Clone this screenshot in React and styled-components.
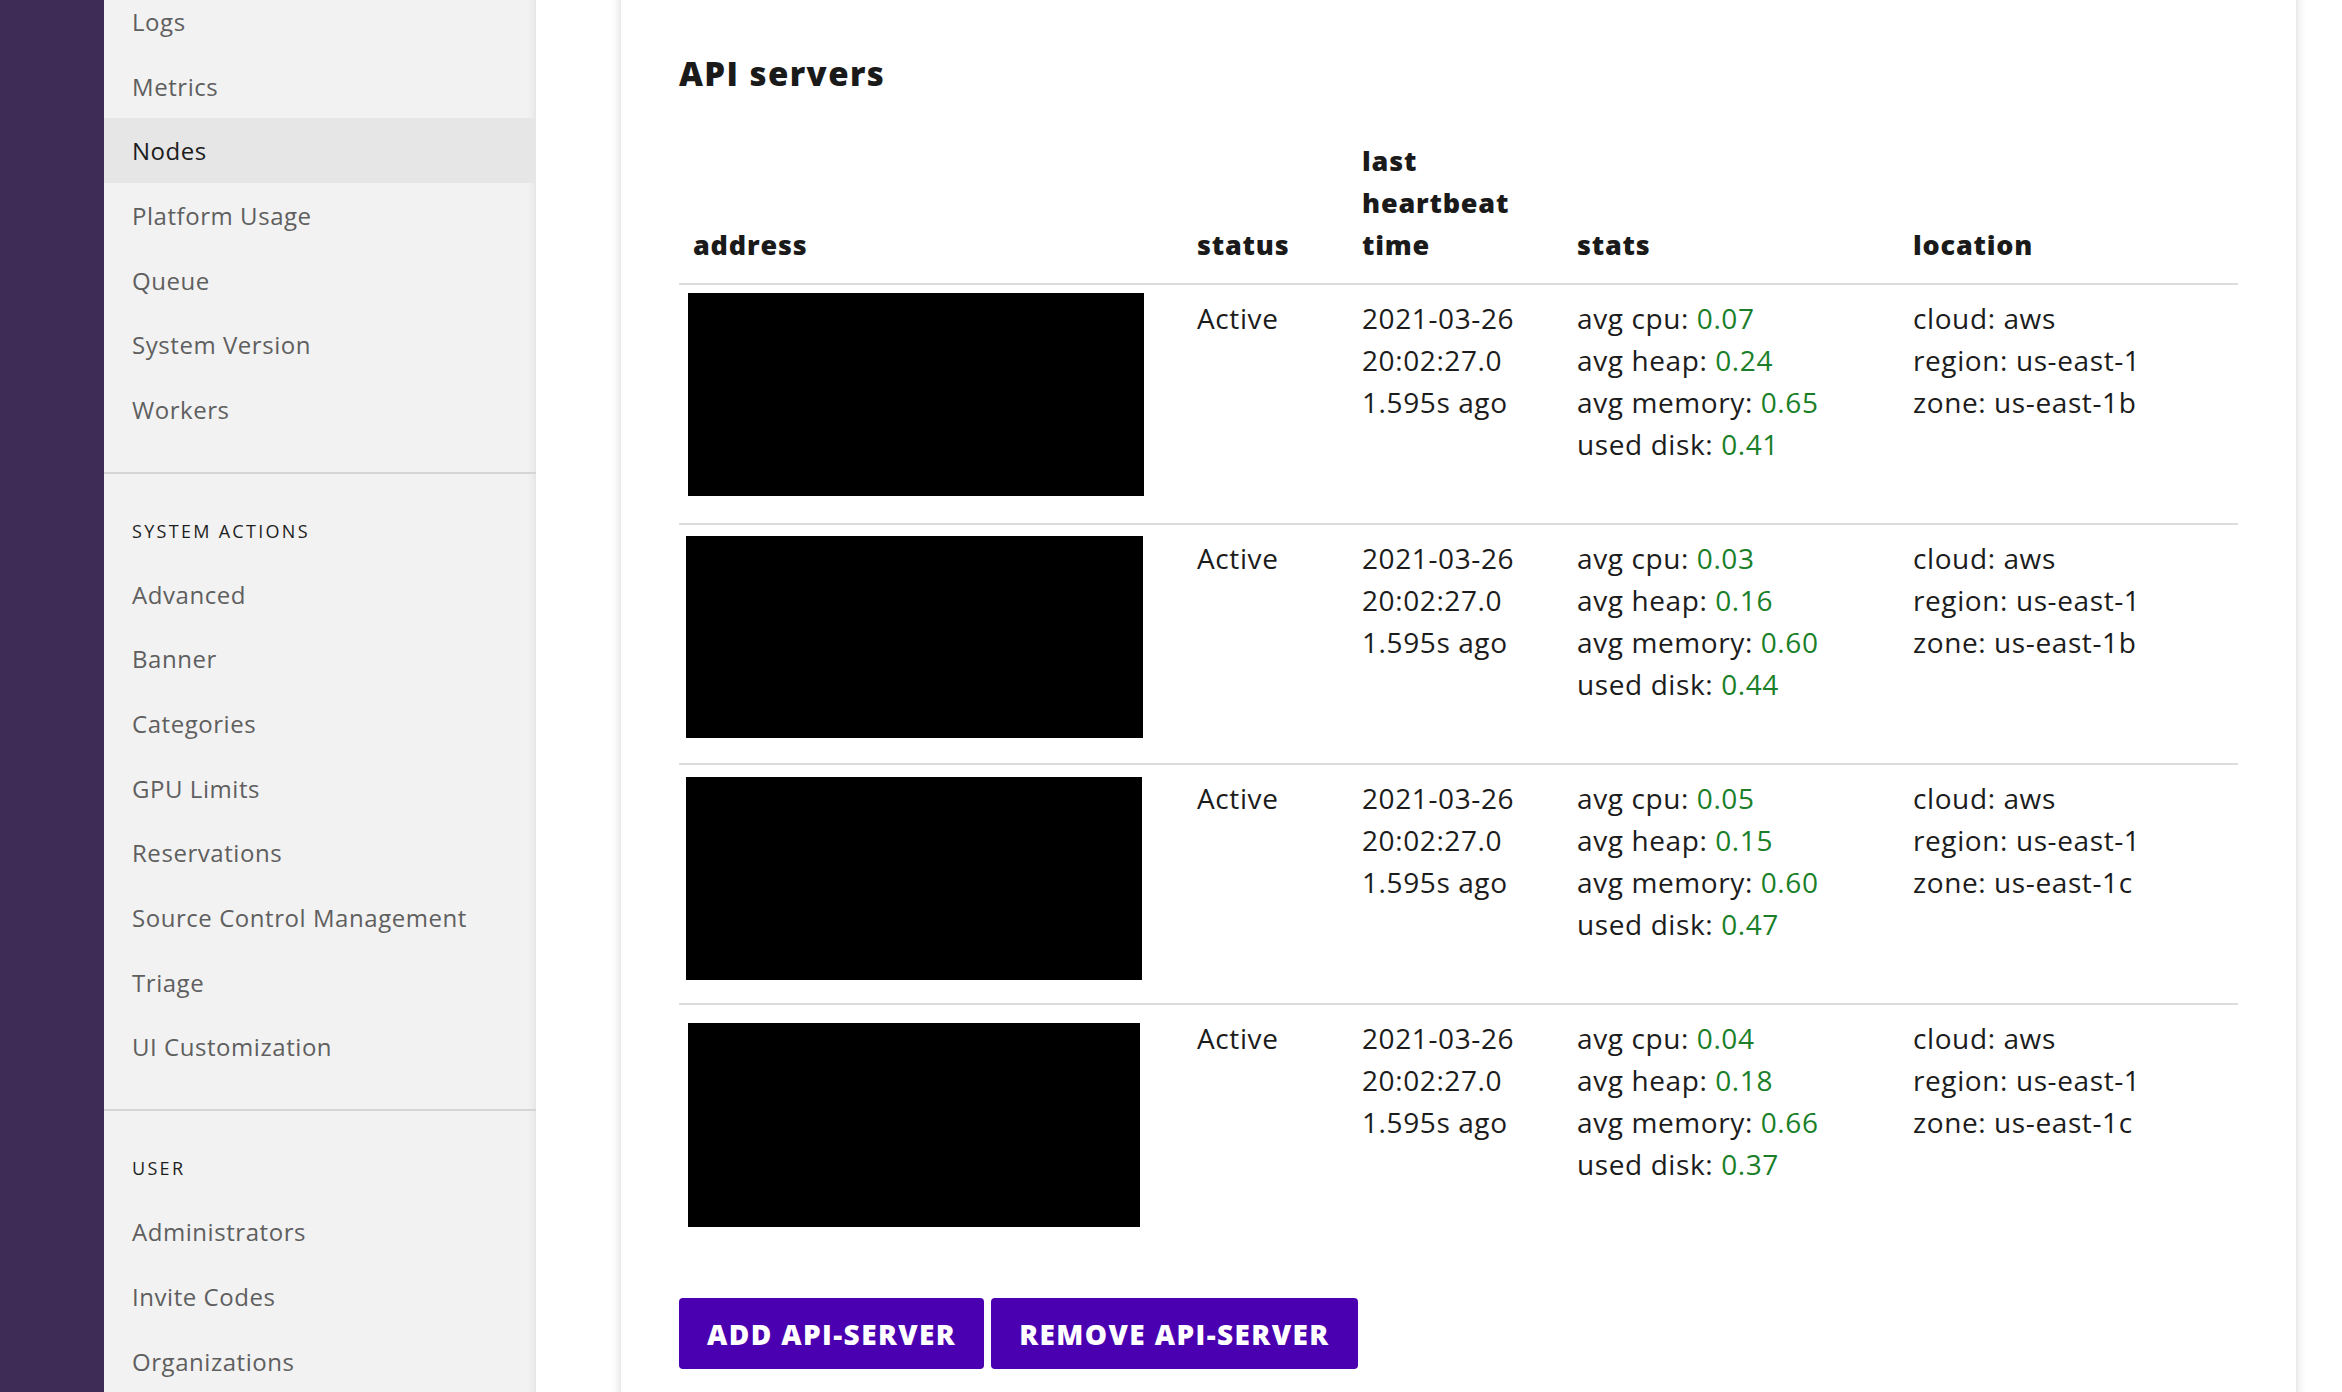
import React from "react";
import styled, { createGlobalStyle } from "styled-components";

const GlobalStyle = createGlobalStyle`
  html, body {
    margin: 0;
    padding: 0;
    background: #ffffff;
    font-family: "Open Sans", "Lato", sans-serif;
    color: #1c1c1c;
  }
`;

const sections = [
  {
    title: null,
    items: ["Logs", "Metrics", "Nodes", "Platform Usage", "Queue", "System Version", "Workers"],
  },
  {
    title: "System Actions",
    items: [
      "Advanced",
      "Banner",
      "Categories",
      "GPU Limits",
      "Reservations",
      "Source Control Management",
      "Triage",
      "UI Customization",
    ],
  },
  {
    title: "User",
    items: ["Administrators", "Invite Codes", "Organizations"],
  },
];

// redaction boxes drawn over the address column, offsets vary per row
const servers = [
  { box: { dx: -5, dy: -4, w: 456, h: 203 }, stats: ["0.07", "0.24", "0.65", "0.41"], zone: "us-east-1b" },
  { box: { dx: -7, dy: -1, w: 457, h: 202 }, stats: ["0.03", "0.16", "0.60", "0.44"], zone: "us-east-1b" },
  { box: { dx: -7, dy: 0, w: 456, h: 203 }, stats: ["0.05", "0.15", "0.60", "0.47"], zone: "us-east-1c" },
  { box: { dx: -5, dy: 6, w: 452, h: 204 }, stats: ["0.04", "0.18", "0.66", "0.37"], zone: "us-east-1c" },
];

const statLabels = ["avg cpu", "avg heap", "avg memory", "used disk"];

export default function App() {
  return (
    <>
      <GlobalStyle />
      <S.Page>
        <S.Rail />
        <S.Sidebar>
          {sections.map((section, i) => (
            <S.Section key={i} $first={i === 0}>
              {section.title && <S.SectionTitle>{section.title}</S.SectionTitle>}
              {section.items.map((item) => (
                <S.NavItem key={item} $active={item === "Nodes"}>
                  {item}
                </S.NavItem>
              ))}
            </S.Section>
          ))}
        </S.Sidebar>
        <S.Main>
          <S.Card>
            <S.Title>API servers</S.Title>
            <S.Table>
              <colgroup>
                <col style={{ width: 504 }} />
                <col style={{ width: 165 }} />
                <col style={{ width: 215 }} />
                <col style={{ width: 336 }} />
                <col />
              </colgroup>
              <thead>
                <tr>
                  <S.Th>address</S.Th>
                  <S.Th>status</S.Th>
                  <S.Th>
                    last
                    <br />
                    heartbeat
                    <br />
                    time
                  </S.Th>
                  <S.Th>stats</S.Th>
                  <S.Th>location</S.Th>
                </tr>
              </thead>
              <tbody>
                {servers.map((server, i) => (
                  <S.Row key={i}>
                    <S.Td>
                      <S.AddressCell>
                        <S.Redacted $dx={server.box.dx} $dy={server.box.dy} $w={server.box.w} $h={server.box.h} />
                      </S.AddressCell>
                    </S.Td>
                    <S.Td>Active</S.Td>
                    <S.Td>
                      <div>2021-03-26</div>
                      <div>20:02:27.0</div>
                      <div>1.595s ago</div>
                    </S.Td>
                    <S.Td>
                      {statLabels.map((label, j) => (
                        <div key={label}>
                          {label}: <S.Value>{server.stats[j]}</S.Value>
                        </div>
                      ))}
                    </S.Td>
                    <S.Td>
                      <div>cloud: aws</div>
                      <div>region: us-east-1</div>
                      <div>zone: {server.zone}</div>
                    </S.Td>
                  </S.Row>
                ))}
              </tbody>
            </S.Table>
            <S.Actions>
              <S.Button>Add api-server</S.Button>
              <S.Button>Remove api-server</S.Button>
            </S.Actions>
          </S.Card>
        </S.Main>
      </S.Page>
    </>
  );
}

const S = {
  Page: styled.div`
    display: flex;
    height: 100vh;
    overflow: hidden;
  `,
  Rail: styled.div`
    width: 104px;
    flex-shrink: 0;
    background: #3e2c57;
  `,
  Sidebar: styled.nav`
    width: 432px;
    flex-shrink: 0;
    background: #f2f2f2;
    box-shadow: inset -10px 0 10px -10px rgba(0, 0, 0, 0.1);
    overflow: hidden;
  `,
  Section: styled.div`
    padding: ${(p) => (p.$first ? "0" : "46px")} 0 30px;
    margin-top: ${(p) => (p.$first ? "-11px" : "0")};
    border-bottom: 2px solid #d5d5d5;
  `,
  SectionTitle: styled.div`
    padding-left: 28px;
    font-size: 18px;
    line-height: 22px;
    letter-spacing: 2.3px;
    text-transform: uppercase;
    color: #1e1e1e;
    margin-bottom: 20px;
  `,
  NavItem: styled.div`
    height: 64.7px;
    display: flex;
    align-items: center;
    padding-left: 28px;
    font-size: 24px;
    letter-spacing: 0.55px;
    color: ${(p) => (p.$active ? "#1c1c1c" : "#5f5f5f")};
    background: ${(p) => (p.$active ? "#e6e6e6" : "transparent")};
  `,
  Main: styled.main`
    flex: 1;
    padding: 0 46px 0 85px;
    min-width: 0;
  `,
  Card: styled.section`
    margin-top: -20px;
    padding: 74px 58px 60px;
    background: #ffffff;
    box-shadow: 0 0 10px rgba(0, 0, 0, 0.18);
    min-height: 1500px;
  `,
  Title: styled.h2`
    margin: 0;
    font-size: 33px;
    line-height: 40px;
    font-weight: 800;
    letter-spacing: 1.4px;
    color: #1a1a1a;
  `,
  Table: styled.table`
    width: 100%;
    margin-top: 46px;
    border-collapse: separate;
    border-spacing: 0;
    table-layout: fixed;
  `,
  Th: styled.th`
    text-align: left;
    vertical-align: bottom;
    padding: 0 14px 17px;
    font-size: 27px;
    line-height: 42px;
    font-weight: 800;
    letter-spacing: 0.8px;
    color: #1a1a1a;
    border-bottom: 2px solid #dcdcdc;
  `,
  Row: styled.tr`
    &:last-child td {
      border-bottom: none;
    }
  `,
  Td: styled.td`
    vertical-align: top;
    padding: 12px 14px 0;
    font-size: 28px;
    line-height: 42px;
    letter-spacing: 0.6px;
    color: #1c1c1c;
    white-space: nowrap;
    border-bottom: 2px solid #dcdcdc;
  `,
  AddressCell: styled.div`
    display: flow-root;
    height: 226px;
  `,
  Redacted: styled.div`
    width: ${(p) => p.$w}px;
    height: ${(p) => p.$h}px;
    margin-left: ${(p) => p.$dx}px;
    margin-top: ${(p) => p.$dy}px;
    background: #000000;
  `,
  Value: styled.span`
    color: #1b7f2a;
  `,
  Actions: styled.div`
    display: flex;
    gap: 7px;
    margin-top: 55px;
  `,
  Button: styled.button`
    height: 71px;
    padding: 0 28px;
    border: none;
    border-radius: 4px;
    background: #4a00b0;
    color: #ffffff;
    font-family: "Open Sans", sans-serif;
    font-size: 28px;
    font-weight: 800;
    letter-spacing: 1.4px;
    text-transform: uppercase;
  `,
};
